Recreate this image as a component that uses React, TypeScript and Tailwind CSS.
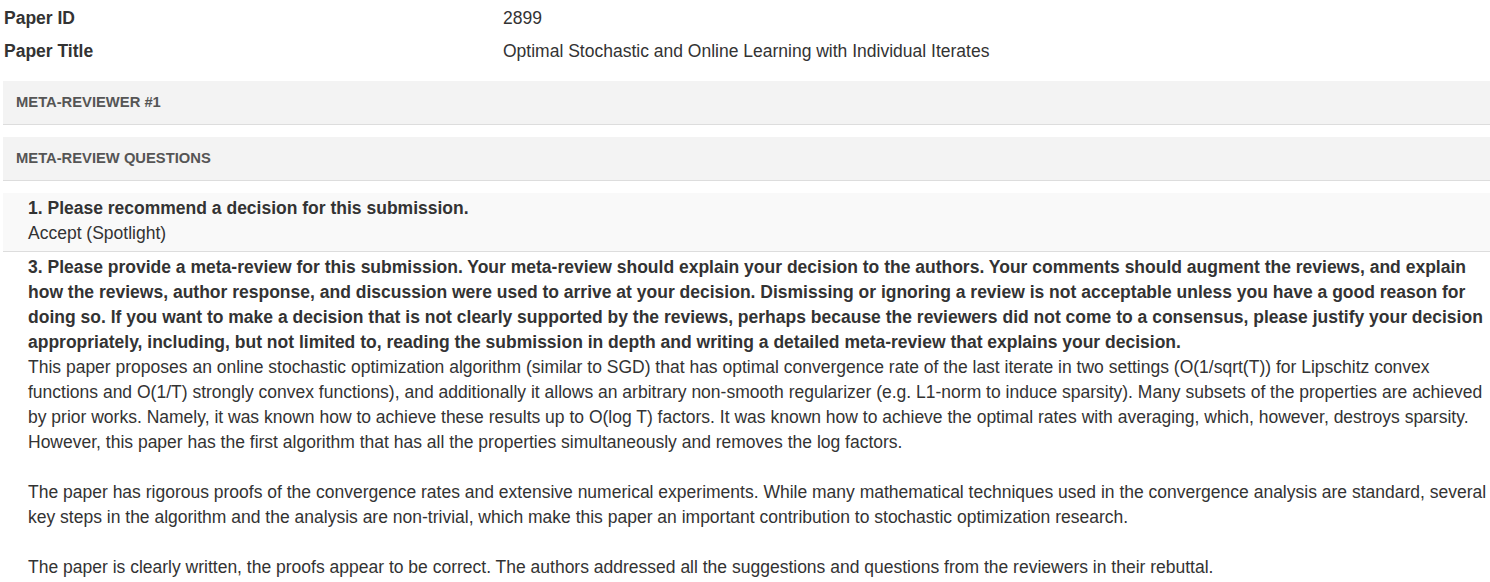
import React from 'react';

const questionText =
  '3. Please provide a meta-review for this submission. Your meta-review should explain your decision to the authors. Your comments should augment the reviews, and explain how the reviews, author response, and discussion were used to arrive at your decision. Dismissing or ignoring a review is not acceptable unless you have a good reason for doing so. If you want to make a decision that is not clearly supported by the reviews, perhaps because the reviewers did not come to a consensus, please justify your decision appropriately, including, but not limited to, reading the submission in depth and writing a detailed meta-review that explains your decision.';

const metaReview = [
  'This paper proposes an online stochastic optimization algorithm (similar to SGD) that has optimal convergence rate of the last iterate in two settings (O(1/sqrt(T)) for Lipschitz convex functions and O(1/T) strongly convex functions), and additionally it allows an arbitrary non-smooth regularizer (e.g. L1-norm to induce sparsity). Many subsets of the properties are achieved by prior works. Namely, it was known how to achieve these results up to O(log T) factors. It was known how to achieve the optimal rates with averaging, which, however, destroys sparsity. However, this paper has the first algorithm that has all the properties simultaneously and removes the log factors.',
  'The paper has rigorous proofs of the convergence rates and extensive numerical experiments. While many mathematical techniques used in the convergence analysis are standard, several key steps in the algorithm and the analysis are non-trivial, which make this paper an important contribution to stochastic optimization research.',
  'The paper is clearly written, the proofs appear to be correct. The authors addressed all the suggestions and questions from the reviewers in their rebuttal.',
];

function SectionHeader({ title }: { title: string }) {
  return (
    <div className="bg-[#f3f3f3] border-b border-[#dddddd] h-[44px] pl-[13px] flex items-center text-[14.75px] font-bold uppercase text-[#555555]">
      {title}
    </div>
  );
}

export default function App() {
  return (
    <div className="bg-white min-h-screen pl-[3px] text-[#333333] font-['Liberation_Sans',Arial,sans-serif]">
      {/* Paper info */}
      <div className="text-[17.5px]">
        <div className="flex h-[36px] items-center">
          <div className="w-[500px] pl-[1px] font-bold">Paper ID</div>
          <div>2899</div>
        </div>
        <div className="flex h-[28px] items-center pt-[2px]">
          <div className="w-[500px] pl-[1px] font-bold">Paper Title</div>
          <div>Optimal Stochastic and Online Learning with Individual Iterates</div>
        </div>
      </div>

      <div className="mt-[17px]">
        <SectionHeader title="Meta-Reviewer #1" />
      </div>
      <div className="mt-[12px]">
        <SectionHeader title="Meta-Review Questions" />
      </div>

      {/* Question 1 */}
      <div className="mt-[12px] bg-[#f9f9f9] border-b border-[#dddddd] pl-[25px] pt-[3px] pb-[5px] text-[17.5px] leading-[25px]">
        <div className="font-bold">1. Please recommend a decision for this submission.</div>
        <div>Accept (Spotlight)</div>
      </div>

      {/* Question 3 */}
      <div className="pl-[25px] pt-[3px] text-[17.5px] leading-[25px]">
        <div className="font-bold">{questionText}</div>
        {metaReview.map((p, i) => (
          <p key={i} className={i > 0 ? 'mt-[25px]' : ''}>
            {p}
          </p>
        ))}
      </div>
    </div>
  );
}
